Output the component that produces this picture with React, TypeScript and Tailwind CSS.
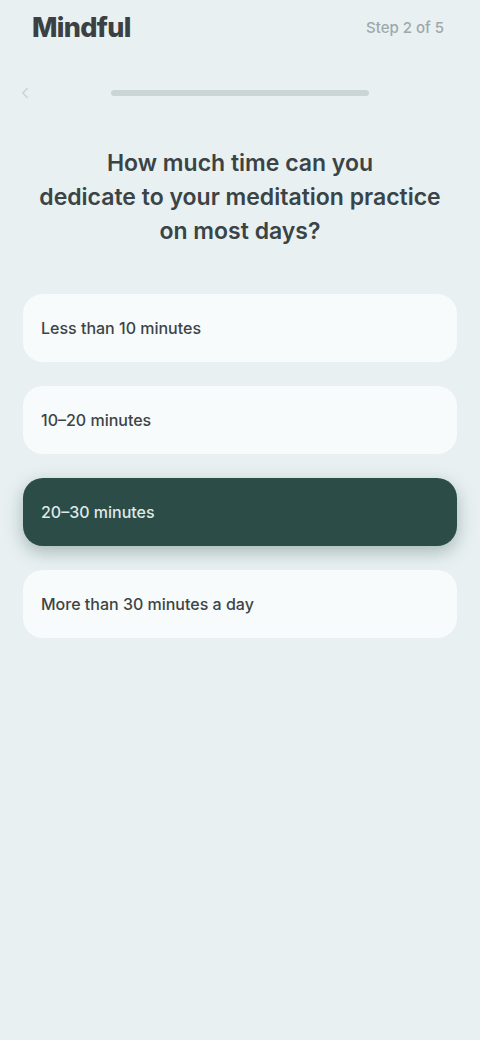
import React, { useState } from 'react';
import { ChevronLeft } from 'lucide-react';

const options = [
  'Less than 10 minutes',
  '10–20 minutes',
  '20–30 minutes',
  'More than 30 minutes a day',
];

export default function App() {
  const [selected, setSelected] = useState(2);

  return (
    <div className="min-h-[1040px] w-full bg-[#e8f0f2] font-['Inter','Noto_Sans',sans-serif] text-[#2f3a3c]">
      {/* Top bar */}
      <div className="flex h-14 items-center justify-between pl-[32px] pr-[36px]">
        <span className="text-[27px] font-extrabold tracking-tight text-[#3b4042]">Mindful</span>
        <span className="text-[15px] font-medium text-[#9ea8ab]">Step 2 of 5</span>
      </div>

      {/* Progress row */}
      <div className="relative mt-[28px] flex h-[18px] items-center justify-center">
        <button className="absolute left-[16px] top-0 text-[#c9d3d5]">
          <ChevronLeft className="h-[18px] w-[18px]" strokeWidth={2} />
        </button>
        <div className="h-[6px] w-[258px] rounded-full bg-[#cad6d6]" />
      </div>

      {/* Question */}
      <h1 className="mt-[44px] px-4 text-center text-[23px] font-semibold leading-[34px] text-[#3a4447]">
        How much time can you
        <br />
        dedicate to your meditation practice
        <br />
        on most days?
      </h1>

      {/* Options */}
      <div className="mt-[46px] flex flex-col gap-6 px-[23px]">
        {options.map((label, i) => {
          const active = i === selected;
          return (
            <button
              key={label}
              onClick={() => setSelected(i)}
              className={
                active
                  ? 'flex h-[68px] items-center rounded-[20px] bg-[#2b4c47] px-[18px] text-left text-[16px] font-medium text-[#dfe9e7] shadow-[0_6px_18px_rgba(43,76,71,0.35)]'
                  : 'flex h-[68px] items-center rounded-[20px] bg-[#f8fbfb] px-[18px] text-left text-[16px] font-medium text-[#3c4446]'
              }
            >
              {label}
            </button>
          );
        })}
      </div>
    </div>
  );
}
